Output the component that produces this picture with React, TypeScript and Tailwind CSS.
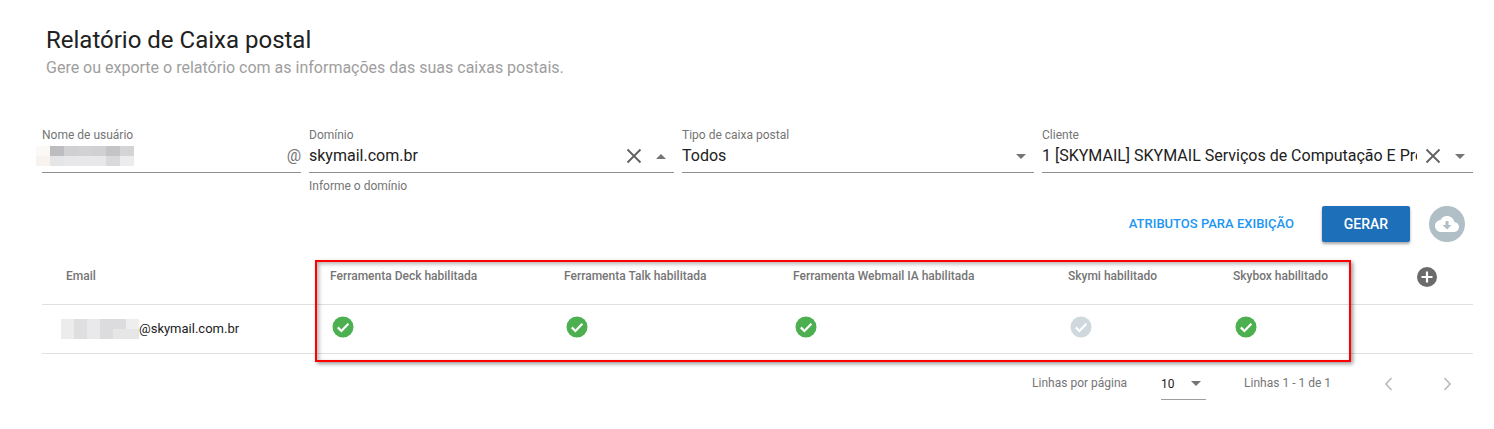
import React from "react";

const font = { fontFamily: "Roboto, sans-serif" };

function Blur({ cells, cols, w, h }: { cells: string[]; cols: number; w: number; h: number }) {
  return (
    <div className="grid shrink-0" style={{ gridTemplateColumns: `repeat(${cols}, ${w}px)`, gridAutoRows: `${h}px` }}>
      {cells.map((c, i) => (
        <div key={i} style={{ background: c }} />
      ))}
    </div>
  );
}

function Caret({ up = false, className = "" }: { up?: boolean; className?: string }) {
  return (
    <svg width="10" height="5" viewBox="0 0 10 5" className={className}>
      <path d={up ? "M0 5 L5 0 L10 5 Z" : "M0 0 L5 5 L10 0 Z"} fill="#757575" />
    </svg>
  );
}

function Clear() {
  return (
    <svg width="16" height="16" viewBox="0 0 16 16" className="block shrink-0">
      <path d="M1.500 1.500 L14.500 14.500 M14.500 1.500 L1.500 14.500" stroke="#616161" strokeWidth="1.800" fill="none" />
    </svg>
  );
}

function Check({ on = true }: { on?: boolean }) {
  return (
    <svg width="22" height="22" viewBox="0 0 22 22" className="block">
      <circle cx="11" cy="11" r="10.500" fill={on ? "#4caf50" : "#cfd8dc"} />
      <path d="M5.800 11.400 L9.400 15 L16.400 7.800" stroke="#fff" strokeWidth="2.200" fill="none" />
    </svg>
  );
}

function Field({
  label,
  children,
  helper,
  className,
}: {
  label: string;
  children: React.ReactNode;
  helper?: string;
  className: string;
}) {
  return (
    <div className={className}>
      <div className="text-xs leading-[14px] text-[#757575]">{label}</div>
      <div className="mt-[3px] flex h-[28px] items-center border-b border-[#8f8f8f] pb-[5px] text-base text-[#212121]">
        {children}
      </div>
      {helper && <div className="mt-[6px] text-xs leading-[14px] text-[#757575]">{helper}</div>}
    </div>
  );
}

const cols = [
  "w-[288px] pl-[24px]",
  "w-[234px]",
  "w-[229px]",
  "w-[275px]",
  "w-[165px]",
  "w-[184px]",
];

const headers = [
  "Email",
  "Ferramenta Deck habilitada",
  "Ferramenta Talk habilitada",
  "Ferramenta Webmail IA habilitada",
  "Skymi habilitado",
  "Skybox habilitado",
];

export default function App() {
  return (
    <div className="relative h-[429px] w-[1494px] overflow-hidden bg-white" style={font}>
      <div className="pl-[46px] pt-[26px]">
        <h1 className="text-2xl leading-[28px] text-[#212121]">Relatório de Caixa postal</h1>
        <p className="mt-[2px] text-base leading-[24px] text-[#9e9e9e]">
          Gere ou exporte o relatório com as informações das suas caixas postais.
        </p>
      </div>

      <div className="mt-[48px] flex gap-2 pl-[42px]">
        <Field label="Nome de usuário" className="w-[259px]">
          <div className="-ml-[6px] flex-1">
            <Blur
              cols={7}
              w={14}
              h={10}
              cells={[
                "#fbf8f6", "#bdbdc1", "#d0d0d2", "#d2d2d4", "#d0d0d2", "#c4c4c6", "#d4d4d6",
                "#f9f3ef", "#e4e5e7", "#e8e8ea", "#e8e8ea", "#e8e8ea", "#d8d9db", "#ececee",
              ]}
            />
          </div>
          <span className="text-[#757575]">@</span>
        </Field>
        <Field label="Domínio" helper="Informe o domínio" className="w-[365px]">
          <span className="flex-1">skymail.com.br</span>
          <Clear />
          <Caret up className="ml-[14px] mr-[8px]" />
        </Field>
        <Field label="Tipo de caixa postal" className="w-[352px]">
          <span className="flex-1">Todos</span>
          <Caret className="mr-[8px]" />
        </Field>
        <Field label="Cliente" className="w-[431px]">
          <span className="w-[375px] overflow-hidden whitespace-nowrap">
            1 [SKYMAIL] SKYMAIL Serviços de Computação E Processamento
          </span>
          <span className="ml-[8px]">
            <Clear />
          </span>
          <Caret className="ml-[14px]" />
        </Field>
      </div>

      <div className="mt-[13px] flex items-center justify-end pr-[29px]">
        <span className="text-[13px] font-medium text-[#2196f3]">ATRIBUTOS PARA EXIBIÇÃO</span>
        <button className="ml-[28px] flex h-[36px] w-[88px] items-center justify-center rounded-[2px] bg-[#1e6fb9] text-sm font-medium text-white shadow-[0_2px_3px_rgba(0,0,0,0.35)]">
          GERAR
        </button>
        <span className="ml-[19px] flex h-[36px] w-[36px] items-center justify-center rounded-full bg-[#b0bec5]">
          <svg width="24" height="24" viewBox="0 0 24 24">
            <path
              d="M19.350 10.040C18.670 6.590 15.640 4 12 4 9.110 4 6.600 5.640 5.350 8.040 2.340 8.360 0 10.910 0 14c0 3.310 2.690 6 6 6h13c2.760 0 5-2.240 5-5 0-2.640-2.050-4.780-4.650-4.960z"
              fill="#fff"
            />
            <path d="M10.500 9h3v4h3L12 17.500 7.500 13h3z" fill="#b0bec5" />
          </svg>
        </span>
      </div>

      <div className="ml-[42px] mt-[13px] w-[1431px]">
        <div className="flex h-[50px] items-start border-b border-[#e0e0e0] pt-[13px]">
          {headers.map((h, i) => (
            <div key={h} className={`${cols[i]} shrink-0 text-xs font-medium leading-[16px] text-[#757575]`}>
              {h}
            </div>
          ))}
          <svg width="20" height="20" viewBox="0 0 20 20" className="-mt-[1px]">
            <circle cx="10" cy="10" r="10" fill="#6b6b6b" />
            <path d="M10 4.500V15.500M4.500 10H15.500" stroke="#fff" strokeWidth="2.200" />
          </svg>
        </div>
        <div className="flex h-[49px] items-center border-b border-[#e0e0e0]">
          <div className="flex w-[288px] shrink-0 items-center pl-[19px] text-[13px] text-[#212121]">
            <Blur
              cols={6}
              w={13}
              h={10}
              cells={[
                "#ececec", "#dfdfe1", "#e9e9eb", "#dcdcde", "#dcdcde", "#eeeeee",
                "#ececec", "#dfdfe1", "#e9e9eb", "#dcdcde", "#e6e6e6", "#e6e6e6",
              ]}
            />
            <span>@skymail.com.br</span>
          </div>
          {[true, true, true, false, true].map((on, i) => (
            <div key={i} className={`${cols[i + 1]} mb-[4px] shrink-0 pl-[2px]`}>
              <Check on={on} />
            </div>
          ))}
        </div>
        <div className="flex h-[45px] items-start justify-end pr-[21px] text-xs text-[#757575]">
          <span className="mt-[21px]">Linhas por página</span>
          <div className="ml-[34px] mt-[14px] flex h-[32px] w-[45px] items-center border-b border-[#9e9e9e] text-[#212121]">
            <span>10</span>
            <Caret className="ml-[16px]" />
          </div>
          <span className="ml-[38px] mt-[21px]">Linhas 1 - 1 de 1</span>
          <svg width="10" height="14" viewBox="0 0 10 14" className="ml-[53px] mt-[23px]">
            <path d="M7.500 1 L2 7 L7.500 13" stroke="#bdbdbd" strokeWidth="1.800" fill="none" />
          </svg>
          <svg width="10" height="14" viewBox="0 0 10 14" className="ml-[48px] mt-[23px]">
            <path d="M2.500 1 L8 7 L2.500 13" stroke="#bdbdbd" strokeWidth="1.800" fill="none" />
          </svg>
        </div>
      </div>

      <div className="pointer-events-none absolute left-[315px] top-[260px] h-[102px] w-[1036px] border-2 border-[#ff0000] shadow-[2px_2px_4px_rgba(0,0,0,0.4),inset_2px_2px_4px_rgba(0,0,0,0.3)]" />
    </div>
  );
}
